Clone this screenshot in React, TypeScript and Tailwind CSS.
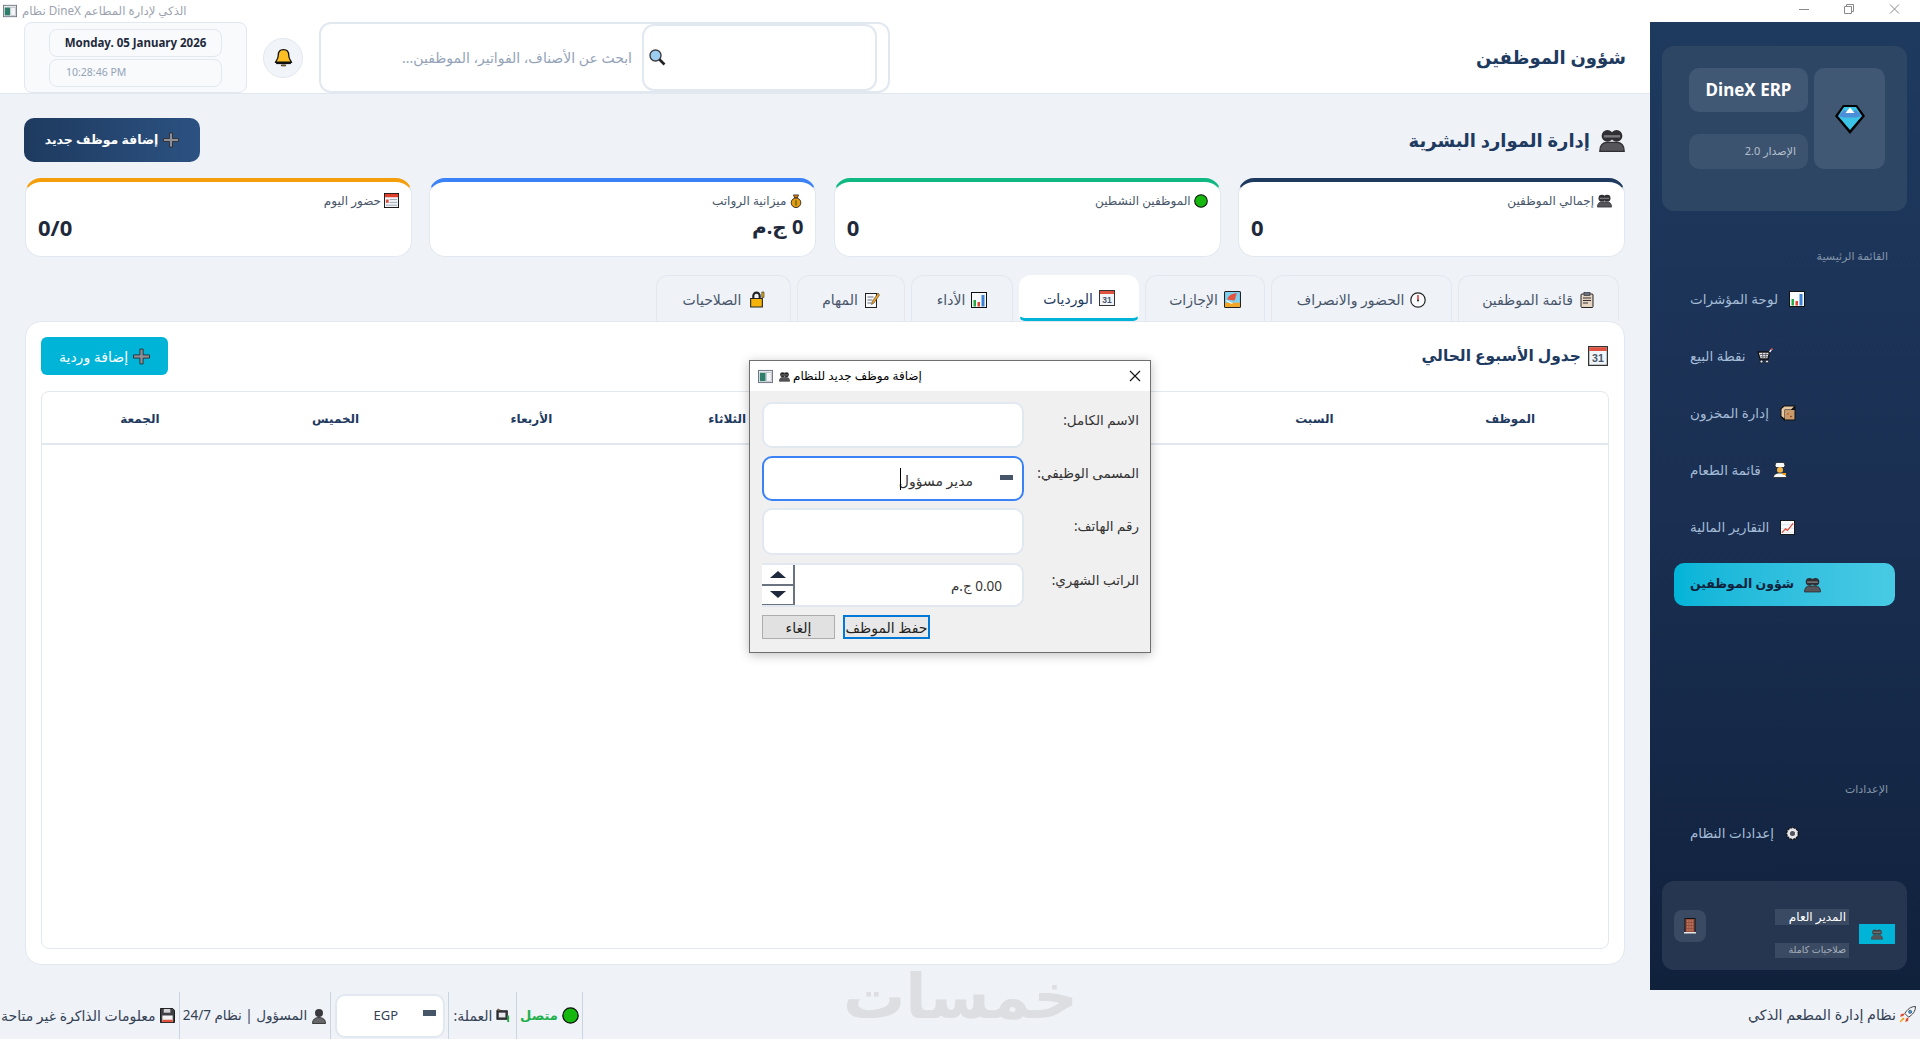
import React from 'react';

type IconProps = { s?: number };

const AppIcon = ({ s = 14 }: IconProps) => (
  <svg width={s} height={s} viewBox="0 0 16 16">
    <rect x="0.500" y="1.500" width="15" height="13" fill="#e5e7eb" stroke="#6b7280" />
    <rect x="2" y="4" width="6" height="9" fill="#2f7d6b" />
    <rect x="9" y="4" width="5" height="9" fill="#f3f4f6" stroke="#9ca3af" strokeWidth="0.500" />
  </svg>
);
const Gem = ({ s = 30 }: IconProps) => (
  <svg width={s} height={s} viewBox="0 0 30 30">
    <path d="M8 1h14l8 11-15 18L0 12z" fill="#000" />
    <path d="M9 3h12l6 9L15 26 3 12z" fill="#3cc4e8" />
    <path d="M3 12 9 6l6 2 6-2 6 6-6 1.500H9z" fill="#4a8fd8" />
    <path d="M10.500 9 15 3.500 19.500 9z" fill="#fff" />
  </svg>
);
const People = ({ s = 16, c = '#2f2f33' }: IconProps & { c?: string }) => (
  <svg width={s} height={s} viewBox="0 0 16 16">
    <circle cx="5.200" cy="5.500" r="3.600" fill={c} />
    <circle cx="10.800" cy="5.500" r="3.600" fill={c} />
    <rect x="3" y="5" width="10" height="1.500" fill="#77777c" />
    <path d="M0.500 15c0-3.500 1.500-5.500 4.700-5.500h5.600c3.200 0 4.700 2 4.700 5.500z" fill="#55555a" stroke={c} strokeWidth="0.800" />
  </svg>
);
const Bust = ({ s = 16 }: IconProps) => (
  <svg width={s} height={s} viewBox="0 0 16 16">
    <circle cx="8" cy="5" r="4" fill="#3a3a3e" />
    <path d="M1.500 15.500c0-4 2.500-6 6.500-6s6.500 2 6.500 6z" fill="#66666b" stroke="#222" strokeWidth="0.800" />
  </svg>
);
const BarChart = ({ s = 16 }: IconProps) => (
  <svg width={s} height={s} viewBox="0 0 16 16">
    <rect x="0.500" y="0.500" width="15" height="15" fill="#f8fafc" stroke="#111" />
    <rect x="2.500" y="8" width="2.500" height="6.500" fill="#22a845" />
    <rect x="6.500" y="10" width="2.500" height="4.500" fill="#e0452c" />
    <rect x="10.500" y="3" width="3" height="11.500" fill="#3b82d6" />
  </svg>
);
const Cart = ({ s = 16 }: IconProps) => (
  <svg width={s} height={s} viewBox="0 0 16 16" fill="none">
    <path d="M1 4h11.500L11 11H3z" fill="#e5e7eb" stroke="#111" strokeWidth="1.300" />
    <path d="M3 6.500h8.500M3.500 8.800h7.500M5.500 4.500 6 11M9 4.500 8.500 11" stroke="#52525b" strokeWidth="0.800" />
    <path d="M12.500 4 15 1" stroke="#f1f5f9" strokeWidth="1.300" />
    <path d="M14 2l1.500-1.500" stroke="#ef4444" strokeWidth="1.300" />
    <circle cx="4.500" cy="13.500" r="1.500" fill="#e5e7eb" stroke="#111" strokeWidth="0.800" />
    <circle cx="10" cy="13.500" r="1.500" fill="#e5e7eb" stroke="#111" strokeWidth="0.800" />
  </svg>
);
const Box = ({ s = 16 }: IconProps) => (
  <svg width={s} height={s} viewBox="0 0 16 16">
    <path d="M0.500 3.500 4 .5h11.500V15.500H4L.5 12z" fill="#111" />
    <path d="M5 5h9.500v9.500H5z" fill="#c99a6b" />
    <path d="M1.500 4 4.500 1.500h9.500L11 4.500H4.500v9L1.500 11z" fill="#e8c9a5" />
    <circle cx="8" cy="9" r="0.800" fill="#c2410c" />
    <circle cx="11" cy="11.500" r="0.800" fill="#7c2d12" />
  </svg>
);
const Chef = ({ s = 16 }: IconProps) => (
  <svg width={s} height={s} viewBox="0 0 16 16">
    <path d="M4 .5h8l1 3-1 2H4L3 3.500z" fill="#f8fafc" stroke="#222" strokeWidth="0.800" />
    <circle cx="8" cy="8" r="3" fill="#f5b342" />
    <path d="M1.500 15.500c0-3 2.500-4.500 6.500-4.500s6.500 1.500 6.500 4.500z" fill="#f8fafc" stroke="#222" strokeWidth="0.800" />
    <path d="M10 11h4v2h-3z" fill="#f59e0b" />
  </svg>
);
const LineChart = ({ s = 15 }: IconProps) => (
  <svg width={s} height={s} viewBox="0 0 16 16" fill="none">
    <rect x="0.500" y="0.500" width="15" height="15" fill="#f8fafc" stroke="#111" />
    <path d="M1 5h14M1 9h14M1 13h14" stroke="#cbd5e1" strokeWidth="0.600" />
    <path d="M2 13.500 6 9.500l2 1.500L14 3.500" stroke="#dc4a32" strokeWidth="1.300" />
  </svg>
);
const Gear = ({ s = 15 }: IconProps) => (
  <svg width={s} height={s} viewBox="0 0 16 16">
    <circle cx="8" cy="8" r="6.300" fill="#e5e7eb" stroke="#111" strokeWidth="1.500" strokeDasharray="2.500 0.800" />
    <circle cx="8" cy="8" r="4.800" fill="#e5e7eb" />
    <circle cx="8" cy="8" r="2.700" fill="#52525b" />
  </svg>
);
const Door = ({ s = 16 }: IconProps) => (
  <svg width={s} height={s} viewBox="0 0 16 16">
    <rect x="3" y="0.500" width="10" height="14" fill="#9b4f3f" stroke="#111" />
    <path d="M5 3h6M5 6h6M5 9h6M5 12h6" stroke="#d39a7c" strokeWidth="1.100" strokeDasharray="1.500 .8" />
    <rect x="2" y="14" width="12" height="1.500" fill="#e5e7eb" />
  </svg>
);
const Rocket = ({ s = 17 }: IconProps) => (
  <svg width={s} height={s} viewBox="0 0 16 16">
    <path d="M15.500 .5c-4.500 0-7.500 2.500-10 6.500l3.500 3.500c4-2.500 6.500-5.500 6.500-10z" fill="#f1f5f9" stroke="#222" strokeWidth="0.800" />
    <circle cx="10.500" cy="5.500" r="1.500" fill="#38a3e8" stroke="#222" strokeWidth="0.500" />
    <path d="M5.500 7 2 7.500l-1 2.500 3-.5zM9 10.500 8.500 14l-2.500 1 .5-3z" fill="#e64a2e" />
    <path d="M4 11.500 1 15l3.500-3z" fill="#f59e0b" stroke="#f59e0b" />
  </svg>
);
const Floppy = ({ s = 15 }: IconProps) => (
  <svg width={s} height={s} viewBox="0 0 16 16">
    <path d="M.5.5h13l2 2v13H.5z" fill="#3f3f46" stroke="#111" />
    <rect x="4" y="1" width="7" height="4" fill="#d4d4d8" />
    <rect x="2.500" y="8" width="11" height="7" fill="#f4f4f5" />
    <rect x="2.500" y="12.500" width="11" height="2.500" fill="#e0523f" />
  </svg>
);
const Money = ({ s = 15 }: IconProps) => (
  <svg width={s} height={s} viewBox="0 0 16 16">
    <rect x="1" y="3" width="11" height="9" fill="#3f3f46" stroke="#111" />
    <path d="M2 1 6 3H1z" fill="#b08968" stroke="#222" strokeWidth="0.600" />
    <rect x="3" y="5" width="7" height="5" fill="#e5e7eb" />
    <path d="M13 8v7" stroke="#22a845" strokeWidth="2" />
  </svg>
);
const Bell = ({ s = 18 }: IconProps) => (
  <svg width={s} height={s} viewBox="0 0 18 18">
    <path d="M9 1.500c-3.500 0-5 2.500-5 5.500 0 3.500-2 5-2.500 6.500h15c-.5-1.500-2.500-3-2.500-6.500 0-3-1.500-5.500-5-5.500z" fill="#fbbf24" stroke="#111" strokeWidth="1.200" />
    <path d="M2 14.500h14" stroke="#111" strokeWidth="1.500" />
    <path d="M7 16h4v1H7z" fill="#f59e0b" stroke="#111" strokeWidth="0.600" />
  </svg>
);
const Search = ({ s = 17 }: IconProps) => (
  <svg width={s} height={s} viewBox="0 0 17 17">
    <circle cx="6.500" cy="6.500" r="5.500" fill="#9dcdf0" stroke="#3f3f46" strokeWidth="1.400" />
    <path d="m10.500 10.500 5 5" stroke="#222" strokeWidth="2.600" />
  </svg>
);
const Plus = ({ s = 16 }: IconProps) => (
  <svg width={s} height={s} viewBox="0 0 16 16">
    <path d="M6.500 1h3v5.500H15.500v3H9.500V15h-3V9.500H.5v-3h6z" fill="#8f8f96" stroke="#27272a" strokeWidth="0.800" />
  </svg>
);
const Calendar = ({ s = 16 }: IconProps) => (
  <svg width={s} height={s} viewBox="0 0 16 16">
    <rect x="0.500" y="0.500" width="15" height="15" fill="#f1f5f9" stroke="#333" />
    <rect x="1" y="1" width="14" height="3" fill="#e0523f" />
    <text x="8" y="13" textAnchor="middle" fontSize="8.500" fontWeight="700" fill="#475569" fontFamily="Liberation Sans, sans-serif">31</text>
  </svg>
);
const Tear = ({ s = 15 }: IconProps) => (
  <svg width={s} height={s} viewBox="0 0 16 16">
    <rect x="0.500" y="0.500" width="15" height="15" fill="#f1f5f9" stroke="#111" />
    <rect x="1" y="1" width="14" height="3.500" fill="#e0402c" />
    <path d="M6 7h8M6 10h8M2 13h12" stroke="#9ca3af" />
    <rect x="2" y="7" width="3" height="3.500" fill="#e0523f" />
  </svg>
);
const Clock = ({ s = 16 }: IconProps) => (
  <svg width={s} height={s} viewBox="0 0 16 16">
    <circle cx="8" cy="8" r="7.200" fill="#f8fafc" stroke="#222" strokeWidth="1.200" />
    <path d="M8 3v5" stroke="#dc2626" strokeWidth="1.400" />
    <circle cx="8" cy="8.500" r="1" fill="#222" />
  </svg>
);
const Beach = ({ s = 17 }: IconProps) => (
  <svg width={s} height={s} viewBox="0 0 16 16">
    <rect x="0.500" y="0.500" width="15" height="15" rx="1" fill="#7fd0ef" stroke="#222" />
    <path d="M1 11h14v4H1z" fill="#f5a524" />
    <path d="M3 8c1-4 5-6 9-6l-2 7z" fill="#e5523d" />
    <path d="M2 9l6 3" stroke="#fff" />
  </svg>
);
const Memo = ({ s = 16 }: IconProps) => (
  <svg width={s} height={s} viewBox="0 0 16 16">
    <rect x="1.500" y="1.500" width="11" height="14" fill="#f8fafc" stroke="#222" />
    <path d="M3.500 5h6M3.500 8h5M3.500 11h4" stroke="#6b7280" />
    <path d="M14 1 8 10l-.5 2.500L10 11l5.500-8z" fill="#f5a524" stroke="#222" strokeWidth="0.500" />
  </svg>
);
const Lock = ({ s = 17 }: IconProps) => (
  <svg width={s} height={s} viewBox="0 0 16 16">
    <path d="M5 7V4.500a3 3 0 0 1 6 0V7" fill="none" stroke="#222" strokeWidth="2" />
    <path d="M2.500 7h11v8h-11z" fill="#f5b30c" stroke="#222" />
    <path d="M13 1h2v5h-2z" fill="#f5b30c" stroke="#222" strokeWidth="0.600" />
  </svg>
);
const Clipboard = ({ s = 16 }: IconProps) => (
  <svg width={s} height={s} viewBox="0 0 16 16">
    <rect x="2" y="2" width="12" height="13.500" rx="1" fill="#e6d5c3" stroke="#222" />
    <rect x="5" y="0.500" width="6" height="3" fill="#6b7280" stroke="#222" strokeWidth="0.600" />
    <path d="M4 6h8M4 8.500h8M4 11h5" stroke="#333" />
  </svg>
);
const Medal = ({ s = 14 }: IconProps) => (
  <svg width={s} height={s} viewBox="0 0 16 16">
    <path d="M5 1h6l-1.500 3.500h-3z" fill="#d97706" stroke="#222" strokeWidth="0.800" />
    <circle cx="8" cy="10" r="5.500" fill="#e79a10" stroke="#222" />
    <path d="M8 7v6" stroke="#3f6212" strokeWidth="1.400" />
  </svg>
);
const GreenDot = ({ s = 14 }: IconProps) => (
  <svg width={s} height={s} viewBox="0 0 16 16">
    <circle cx="8" cy="8" r="7.200" fill="#16b80f" stroke="#111" strokeWidth="1.200" />
  </svg>
);

const navItems = [
  { label: 'لوحة المؤشرات', icon: <BarChart /> },
  { label: 'نقطة البيع', icon: <Cart /> },
  { label: 'إدارة المخزون', icon: <Box /> },
  { label: 'قائمة الطعام', icon: <Chef /> },
  { label: 'التقارير المالية', icon: <LineChart /> },
];

const stats = [
  { label: 'حضور اليوم', value: '0/0', bar: 'border-t-[#f59e0b]', icon: <Tear />, rtl: false },
  { label: 'ميزانية الرواتب', value: '0 ج.م', bar: 'border-t-[#3b82f6]', icon: <Medal />, rtl: true },
  { label: 'الموظفين النشطين', value: '0', bar: 'border-t-[#10b981]', icon: <GreenDot />, rtl: false },
  { label: 'إجمالي الموظفين', value: '0', bar: 'border-t-[#1e3a5f]', icon: <People s={15} />, rtl: false },
];

const tabs = [
  { label: 'قائمة الموظفين', icon: <Clipboard />, w: 'w-[161px]' },
  { label: 'الحضور والانصراف', icon: <Clock />, w: 'w-[181px]' },
  { label: 'الإجازات', icon: <Beach />, w: 'w-[120px]' },
  { label: 'الورديات', icon: <Calendar />, w: 'w-[120px]', active: true },
  { label: 'الأداء', icon: <BarChart />, w: 'w-[102px]' },
  { label: 'المهام', icon: <Memo />, w: 'w-[108px]' },
  { label: 'الصلاحيات', icon: <Lock />, w: 'w-[135px]' },
];

// الأحد and الاثنين sit behind the dialog, so their cells stay blank
const columns = ['الموظف', 'السبت', '', '', 'الثلاثاء', 'الأربعاء', 'الخميس', 'الجمعة'];

function Header() {
  return (
    <header className="h-[72px] shrink-0 bg-white border-b border-[#e2e8f0] flex items-stretch pl-6 pr-6">
      <div className="w-[223px] bg-[#f8fafc] border border-[#e2e8f0] rounded-[8px] flex flex-col items-center pt-[6px] gap-[2px]">
        <div className="w-[173px] h-[28px] bg-[#f8fafc] border border-[#e2e8f0] rounded-[8px] flex items-center justify-center text-[11.500px] font-bold text-[#1e293b]">
          Monday. 05 January 2026
        </div>
        <div className="w-[173px] h-[28px] bg-[#f8fafc] border border-[#e2e8f0] rounded-[8px] flex items-center pl-4 text-[10.500px] text-[#94a3b8]">
          10:28:46 PM
        </div>
      </div>
      <div className="ml-4 self-center w-10 h-10 rounded-full bg-[#f1f5f9] border border-[#e2e8f0] flex items-center justify-center">
        <Bell s={19} />
      </div>
      <div className="ml-4 w-[571px] border-2 border-[#e2e8f0] rounded-[12px] bg-white flex items-center justify-end pr-[11px]">
        <span dir="rtl" className="mr-[10px] text-[14px] text-[#94a3b8]">ابحث عن الأصناف، الفواتير، الموظفين...</span>
        <div className="w-[235px] h-[67px] border-2 border-[#e2e8f0] rounded-[12px] flex items-center pl-[5px]">
          <Search />
        </div>
      </div>
      <h1 dir="rtl" className="ml-auto self-center text-[18px] font-bold text-[#1e3a5f]">شؤون الموظفين</h1>
    </header>
  );
}

function StatCard({ s }: { s: (typeof stats)[number] }) {
  return (
    <div className={`w-[387px] h-[79px] bg-white rounded-[16px] border border-[#e2e8f0] border-t-4 ${s.bar} px-3 pt-[10px]`}>
      <div dir="rtl" className="flex items-center gap-[3px] text-[12px] text-[#475569] h-[17px]">
        {s.icon}
        <span>{s.label}</span>
      </div>
      <div dir={s.rtl ? 'rtl' : 'ltr'} className={`mt-[4px] leading-[28px] font-bold text-[#1e293b] ${s.rtl ? 'text-[20px]' : 'text-[22px]'}`}>
        {s.value}
      </div>
    </div>
  );
}

function Tabs() {
  return (
    <div className="mt-[18px] pr-[6px] h-[46px] flex flex-row-reverse gap-[6px] shrink-0">
      {tabs.map((t) => (
        <div
          key={t.label}
          dir="rtl"
          className={`${t.w} flex items-center justify-center gap-[6px] pt-[2px] rounded-t-[12px] border border-b-0 text-[14px] ${
            t.active
              ? 'bg-white border-white border-b-[3px] border-b-[#00b4d8] text-[#1e3a5f] rounded-b-[6px]'
              : 'border-[#e2e8f0] text-[#475569]'
          }`}
        >
          {t.icon}
          <span>{t.label}</span>
        </div>
      ))}
    </div>
  );
}

function ShiftsPanel() {
  return (
    <section className="h-[644px] bg-white rounded-[16px] border border-[#e2e8f0] px-[15px] pt-[15px] flex flex-col shrink-0">
      <div className="h-[38px] flex items-center justify-between shrink-0">
        <button className="w-[127px] h-[38px] rounded-[6px] bg-[#00b4d8] text-white text-[14px] flex items-center justify-center gap-[5px]" dir="rtl">
          <Plus s={17} />
          <span>إضافة وردية</span>
        </button>
        <h3 dir="rtl" className="flex items-center gap-[7px] text-[15.500px] font-bold text-[#1e3a5f] pr-[1px]">
          <Calendar s={20} />
          <span>جدول الأسبوع الحالي</span>
        </h3>
      </div>
      <div className="mt-4 h-[558px] border border-[#e2e8f0] rounded-[8px] shrink-0">
        <div dir="rtl" className="h-[53px] pt-[2px] grid grid-cols-8 items-center border-b-2 border-[#e2e8f0] text-[12px] font-bold text-[#1e3a5f] text-center">
          {columns.map((c, i) => (
            <span key={i}>{c}</span>
          ))}
        </div>
      </div>
    </section>
  );
}

function Sidebar() {
  return (
    <aside className="w-[270px] shrink-0 h-full bg-gradient-to-b from-[#1e3a5f] via-[#1a2f52] to-[#10213c] flex flex-col px-3 pt-6">
      <div className="h-[165px] w-[245px] rounded-[12px] bg-[#2d4663] flex gap-[6px] pl-[27px] pt-[22px] shrink-0">
        <div className="w-[119px] flex flex-col">
          <div className="h-[44px] rounded-[10px] bg-[#415875] flex items-center justify-center text-[17px] font-bold text-white">DineX ERP</div>
          <div dir="rtl" className="mt-[22px] h-[35px] rounded-[10px] bg-[#3c536f] flex items-center pr-[12px] text-[11px] text-[#b3bfcd]">الإصدار 2.0</div>
        </div>
        <div className="w-[71px] h-[101px] rounded-[10px] bg-[#415875] flex items-center justify-center">
          <Gem />
        </div>
      </div>
      <div dir="rtl" className="mt-[37px] pr-[20px] text-[11px] text-[#8394a9]">القائمة الرئيسية</div>
      <nav className="mt-[13px] flex flex-col gap-[14px]">
        {navItems.map((n) => (
          <div key={n.label} className="h-[43px] flex items-center gap-[11px] pl-[28px] text-[13.500px] text-[#a4bbd6]">
            <span dir="rtl">{n.label}</span>
            <span className="shrink-0">{n.icon}</span>
          </div>
        ))}
        <div className="ml-3 w-[221px] h-[43px] rounded-[10px] bg-gradient-to-r from-[#00b4d8] to-[#48cae4] flex items-center gap-[10px] pl-[16px] text-[12.500px] font-bold text-[#10213c]">
          <span dir="rtl">شؤون الموظفين</span>
          <span className="shrink-0"><People s={17} /></span>
        </div>
      </nav>
      <div dir="rtl" className="mt-auto pr-[20px] text-[11px] text-[#8394a9]">الإعدادات</div>
      <div className="mt-[15px] h-[43px] flex items-center gap-[11px] pl-[28px] text-[13.500px] text-[#a4bbd6]">
        <span dir="rtl">إعدادات النظام</span>
        <span className="shrink-0"><Gear /></span>
      </div>
      <div className="mt-[26px] mb-5 w-[245px] h-[89px] rounded-[12px] bg-[#263651] flex items-center pl-3 shrink-0">
        <div className="w-8 h-8 rounded-[8px] bg-[#3a4a62] flex items-center justify-center">
          <Door />
        </div>
        <div className="ml-[69px] mt-[16px] w-[74px] flex flex-col">
          <div dir="rtl" className="h-4 bg-[#3a4a62] pr-[3px] flex items-center text-[12px] text-white">المدير العام</div>
          <div dir="rtl" className="mt-[18px] h-[15px] bg-[#3a4a62] pr-[3px] flex items-center text-[9.500px] text-[#a7b0bd]">صلاحيات كاملة</div>
        </div>
        <div className="ml-[10px] mt-[16px] w-9 h-5 bg-[#00b4d8] flex items-center justify-center">
          <People s={12} c="#444" />
        </div>
      </div>
    </aside>
  );
}

function AddEmployeeDialog() {
  const field = 'w-[262px] bg-white border-2 border-[#e2e8f0] rounded-[10px]';
  const label = 'flex-1 pr-[11px] pb-[10px] text-right text-[13.500px] text-[#333] whitespace-nowrap';
  return (
    <div className="absolute left-[749px] top-[360px] w-[402px] h-[293px] bg-[#f0f0f0] border border-[#6f6f6f] shadow-[0_2px_10px_rgba(0,0,0,0.25)] flex flex-col">
      <div className="h-[30px] bg-white flex items-center pl-[8px] pr-[9px] shrink-0">
        <AppIcon s={15} />
        <span className="ml-[6px]"><People s={11} c="#222" /></span>
        <span dir="rtl" className="ml-[3px] text-[12px] text-black">إضافة موظف جديد للنظام</span>
        <svg className="ml-auto" width="12" height="12" viewBox="0 0 12 12" stroke="#111" strokeWidth="1.100">
          <path d="M1 1l10 10M11 1 1 11" />
        </svg>
      </div>
      <div className="flex flex-col pl-[12px] pt-[11px]">
        <div className="h-[46px] flex items-center">
          <div className={`${field} h-full`} />
          <div dir="rtl" className={label}>الاسم الكامل:</div>
        </div>
        <div className="mt-2 h-[45px] flex items-center">
          <div className="w-[262px] h-full bg-white border-2 border-[#3b82f6] rounded-[10px] flex items-center justify-end pr-[9px] relative">
            <span dir="rtl" className="mr-[27px] pt-1 text-[14px] text-[#333]">مدير مسؤول</span>
            <span className="absolute left-[136px] top-[10px] h-[22px] w-px bg-black" />
            <span className="w-[13px] h-[5px] bg-[#475569] -mt-[3px]" />
          </div>
          <div dir="rtl" className={label}>المسمى الوظيفي:</div>
        </div>
        <div className="mt-[7px] h-[47px] flex items-center">
          <div className={`${field} h-full`} />
          <div dir="rtl" className={label}>رقم الهاتف:</div>
        </div>
        <div className="mt-[8px] h-[44px] flex items-center">
          <div className={`${field} h-full flex items-center justify-end pr-[20px] overflow-hidden border-l-0 rounded-l-none`}>
            <div className="mr-auto w-[33px] h-full flex flex-col border-r-2 border-b border-[#6b7280] bg-white">
              <div className="flex-1 flex items-center justify-center border-b-2 border-[#6b7280]">
                <span className="w-0 h-0 border-x-[8px] border-x-transparent border-b-[7px] border-b-[#1e293b]" />
              </div>
              <div className="flex-1 flex items-center justify-center">
                <span className="w-0 h-0 border-x-[8px] border-x-transparent border-t-[7px] border-t-[#1e293b]" />
              </div>
            </div>
            <span dir="rtl" className="pt-[2px] text-[13.500px] text-[#333]">0.00 ج.م</span>
          </div>
          <div dir="rtl" className={label}>الراتب الشهري:</div>
        </div>
        <div className="mt-[8px] flex gap-2">
          <button className="w-[73px] h-[24px] bg-[#e1e1e1] border border-[#adadad] text-[14px] text-[#222]">إلغاء</button>
          <button className="w-[87px] h-[24px] bg-[#e8e8e8] border-2 border-[#0078d7] text-[14px] text-[#222] whitespace-nowrap overflow-hidden">حفظ الموظف</button>
        </div>
      </div>
    </div>
  );
}

function StatusBar() {
  const sep = 'border-r border-[#cbd5e1]';
  return (
    <footer className="relative h-[49px] shrink-0 flex items-stretch text-[14px] text-[#334155] pr-1">
      <div dir="rtl" className={`w-[180px] ${sep} mt-[2px] flex items-center justify-end gap-[4px] pl-[1px]`}>
        <Floppy />
        <span className="whitespace-nowrap">معلومات الذاكرة غير متاحة</span>
      </div>
      <div dir="rtl" className={`w-[151px] ${sep} mt-[2px] flex items-center justify-center gap-[4px]`}>
        <Bust />
        <span className="whitespace-nowrap text-[13.500px]">المسؤول | نظام 24/7</span>
      </div>
      <div className={`w-[118px] ${sep} mt-[2px] flex items-center justify-center`}>
        <div className="w-[110px] h-[44px] bg-white border-2 border-[#e2e8f0] rounded-[10px] flex items-center relative pl-[37px] text-[13px]">
          EGP
          <span className="absolute right-[7px] top-[14px] w-[13px] h-[6px] bg-[#475569]" />
        </div>
      </div>
      <div dir="rtl" className={`w-[68px] ${sep} mt-[2px] flex items-center justify-center gap-[4px]`}>
        <Money />
        <span>العملة:</span>
      </div>
      <div dir="rtl" className={`w-[66px] ${sep} mt-[2px] flex items-center justify-center gap-[4px]`}>
        <GreenDot s={17} />
        <span className="text-[#22b04c] text-[13px] font-bold">متصل</span>
      </div>
      <div dir="rtl" className="ml-auto flex items-center gap-[3px] text-[14.300px]">
        <Rocket />
        <span>نظام إدارة المطعم الذكي</span>
      </div>
      <span dir="rtl" className="absolute left-[843px] -top-[31px] text-[62px] leading-[70px] font-bold text-[#dcdee1]">خمسات</span>
    </footer>
  );
}

export default function App() {
  return (
    <div className="relative w-[1920px] h-[1039px] overflow-hidden bg-[#eff2f7] flex flex-col [font-family:'Noto_Sans','DejaVu_Sans',sans-serif]">
      <div className="h-[22px] bg-white flex items-center pl-[3px] pr-[20px] shrink-0">
        <AppIcon />
        <span className="ml-[5px] text-[11.700px] text-[#9ca3af]">نظام DineX الذكي لإدارة المطاعم</span>
        <svg className="ml-auto self-start mt-[3px]" width="101" height="12" viewBox="0 0 101 12" fill="none" stroke="#8a8a8a">
          <path d="M0 6.500h10" />
          <path d="M45.500 3.500h7v7h-7zM47.500 3.500v-2h7v7h-2" />
          <path d="M91 1.500l9 9M100 1.500l-9 9" />
        </svg>
      </div>
      <div className="h-[968px] flex shrink-0">
        <main className="w-[1650px] flex flex-col">
          <Header />
          <div className="px-[25px] pt-[24px] flex flex-col">
            <div className="h-[44px] flex items-center justify-between">
              <button dir="rtl" className="w-[176px] h-[44px] -ml-px rounded-[10px] bg-gradient-to-l from-[#2c5282] to-[#1e3a5f] text-white text-[12.500px] font-bold flex items-center justify-center gap-[5px]">
                <Plus />
                <span>إضافة موظف جديد</span>
              </button>
              <h2 dir="rtl" className="flex items-center gap-[9px] text-[18px] font-bold text-[#1e3a5f]">
                <People s={26} />
                <span>إدارة الموارد البشرية</span>
              </h2>
            </div>
            <div className="mt-4 flex justify-between">
              {stats.map((s) => (
                <StatCard key={s.label} s={s} />
              ))}
            </div>
            <Tabs />
            <ShiftsPanel />
          </div>
        </main>
        <Sidebar />
      </div>
      <StatusBar />
      <AddEmployeeDialog />
    </div>
  );
}
